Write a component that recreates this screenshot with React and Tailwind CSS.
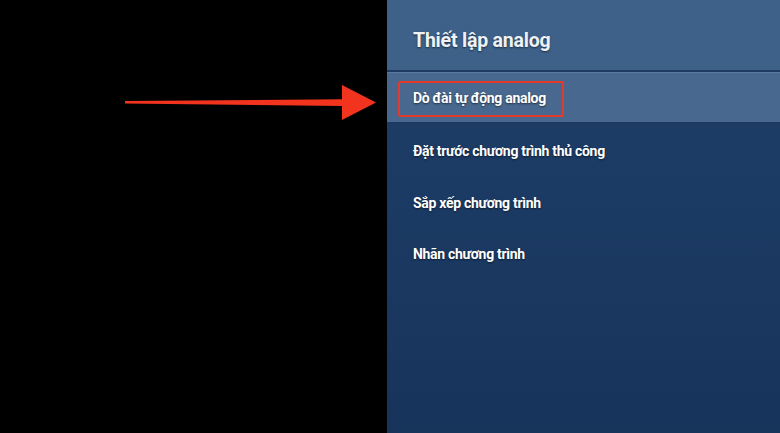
import React from "react";

const items = [
  "Đặt trước chương trình thủ công",
  "Sắp xếp chương trình",
  "Nhãn chương trình",
];

const Arrow = () => (
  <svg width="252" height="38" viewBox="0 0 252 38" className="block">
    <polygon
      points="0,16 217,14.3 217,0 251,17.5 217,35 217,21 0,18.6"
      fill="#f2341f"
    />
  </svg>
);

const shadow = "[text-shadow:0_1px_2px_rgba(0,0,0,0.55)]";

export default function App() {
  return (
    <div
      className="flex w-[780px] h-[433px] bg-black overflow-hidden"
      style={{ fontFamily: "Roboto, 'Noto Sans', sans-serif" }}
    >
      {/* left black area with pointer arrow */}
      <div className="w-[387px] shrink-0 pt-[85px] pl-[125px]">
        <Arrow />
      </div>

      {/* TV menu panel */}
      <div className="flex-1 flex flex-col bg-gradient-to-b from-[#1f3f69] via-[#1b3a63] to-[#17345b]">
        <div className="h-[70px] shrink-0 bg-[#3d6189] flex items-center pl-[26px] pt-[12px]">
          <h1 className={`text-[19.5px] font-bold tracking-[-0.2px] text-[#eef2f7] ${shadow}`}>
            Thiết lập analog
          </h1>
        </div>
        <div className="h-[2px] bg-[#1d3b62]" />
        <div className="h-[1px] bg-[#5a7aa0]" />

        <div className="h-[51px] shrink-0 bg-[#48688f] flex items-center pl-[11px] pt-[2px] border-b-2 border-[#1d3b62]">
          <div className="h-[36px] w-[166px] rounded-[2px] border-[2.5px] border-[#e23a2d] flex items-center pl-[13px]">
            <span className={`text-[14px] font-bold tracking-[-0.3px] text-white ${shadow}`}>
              Dò đài tự động analog
            </span>
          </div>
        </div>

        <div className="pt-[2px] flex flex-col">
          {items.map((t) => (
            <div key={t} className="h-[51.5px] shrink-0 flex items-center pl-[26px]">
              <span className={`text-[14px] font-bold tracking-[-0.3px] text-white ${shadow}`}>
                {t}
              </span>
            </div>
          ))}
        </div>
      </div>
    </div>
  );
}
